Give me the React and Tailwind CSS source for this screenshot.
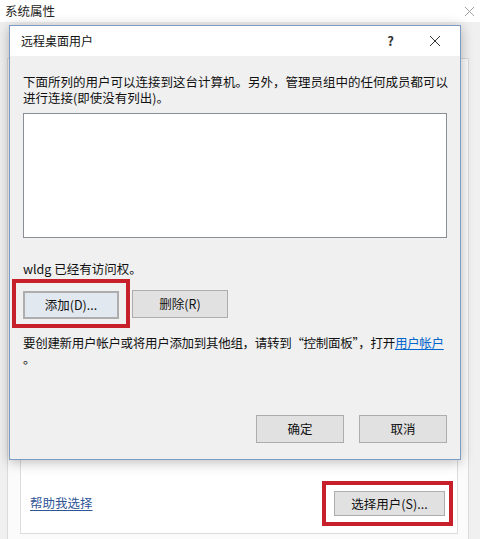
import * as React from 'react';

const FONT = "font-['Noto_Sans_CJK_SC','Liberation_Sans',sans-serif]";

function CloseIcon({ className }) {
  return (
    <svg viewBox="0 0 12 12" className={className} fill="none" stroke="currentColor" strokeWidth="1">
      <path d="M1 1 L11 11 M11 1 L1 11" />
    </svg>
  );
}

function Btn({ children, className = '' }) {
  return (
    <div
      className={`flex items-center justify-center bg-[#e1e1e1] border border-[#adadad] text-[12.5px] leading-[16px] text-[#111] ${className}`}
    >
      {children}
    </div>
  );
}

export default function App() {
  return (
    <div className={`relative w-[480px] h-[539px] bg-white overflow-hidden ${FONT}`}>
      {/* Outer window: 系统属性 */}
      <div className="flex flex-col h-full">
        <div className="h-[22px] shrink-0 flex items-center justify-between pl-[5px] pr-[5px] bg-white">
          <span className="text-[12.5px] leading-[16px] text-[#222]">系统属性</span>
          <CloseIcon className="w-[11px] h-[11px] text-[#9a9a9a]" />
        </div>
        <div className="flex-1 min-h-0 bg-[#f0f0f0] pt-[36px] pl-[7px] pr-[11px]">
          <div className="bg-[#fbfbfb] border border-[#dadada] h-[600px] pt-[10px] pl-[12px] pr-[10px]">
            <div className="h-[465px] border border-[#dcdcdc] bg-white flex flex-col justify-end">
              <div className="flex items-center justify-between pl-[9px] pr-[4px] pb-[7px]">
                <span className="text-[12.5px] leading-[16px] text-[#2f5596] underline underline-offset-2 mb-[2px]">
                  帮助我选择
                </span>
                <div className="border-[4px] border-[#c8202a] pt-[6px] pb-[6px] pl-[8px] pr-[4px]">
                  <Btn className="w-[111px] h-[25px]">选择用户(S)...</Btn>
                </div>
              </div>
            </div>
          </div>
        </div>
      </div>

      {/* Dialog: 远程桌面用户 */}
      <div className="absolute left-[9px] top-[25px] w-[452px] h-[435px] border border-[#7c9cc6] bg-[#f0f0f0] shadow-[0_2px_12px_rgba(0,0,0,0.28)] flex flex-col">
        <div className="h-[30px] bg-white flex items-center pl-[11px] shrink-0">
          <span className="text-[12px] leading-[16px] text-[#111] flex-1">远程桌面用户</span>
          <span className="text-[13px] leading-[16px] font-bold text-[#333] mr-[35px]">?</span>
          <CloseIcon className="w-[12px] h-[12px] text-[#333] mr-[19px]" />
        </div>

        <div className="flex-1 flex flex-col pl-[13px] pr-[13px] pt-[18px] pb-[16px]">
          <p className="text-[12.5px] leading-[16px] text-[#111] whitespace-nowrap">
            下面所列的用户可以连接到这台计算机。另外，管理员组中的任何成员都可以
            <br />
            进行连接(即使没有列出)。
          </p>

          <div className="mt-[7px] h-[125px] bg-white border border-[#8a8f96]" />

          <p className="mt-[23px] text-[12.5px] leading-[16px] text-[#111]">wldg 已经有访问权。</p>

          <div className="mt-[2px] flex items-center">
            <div className="-ml-[11px] border-[4px] border-[#c8202a] pt-[8px] pb-[5px] pl-[7px] pr-[7px]">
              <Btn className="w-[96px] h-[28px] border-2 border-[#3b78b5] bg-[#e1e8ef]">添加(D)...</Btn>
            </div>
            <Btn className="ml-[2px] w-[96px] h-[28px]">删除(R)</Btn>
          </div>

          <p className="mt-[7px] text-[12.5px] leading-[16px] text-[#111] whitespace-nowrap tracking-[-0.3px]">
            要创建新用户帐户或将用户添加到其他组，请转到“控制面板”，打开
            <span className="text-[#0066cc] underline">用户帐户</span>
            <br />。
          </p>

          <div className="mt-auto flex justify-end gap-[15px]">
            <Btn className="w-[88px] h-[28px]">确定</Btn>
            <Btn className="w-[88px] h-[28px]">取消</Btn>
          </div>
        </div>
      </div>
    </div>
  );
}
